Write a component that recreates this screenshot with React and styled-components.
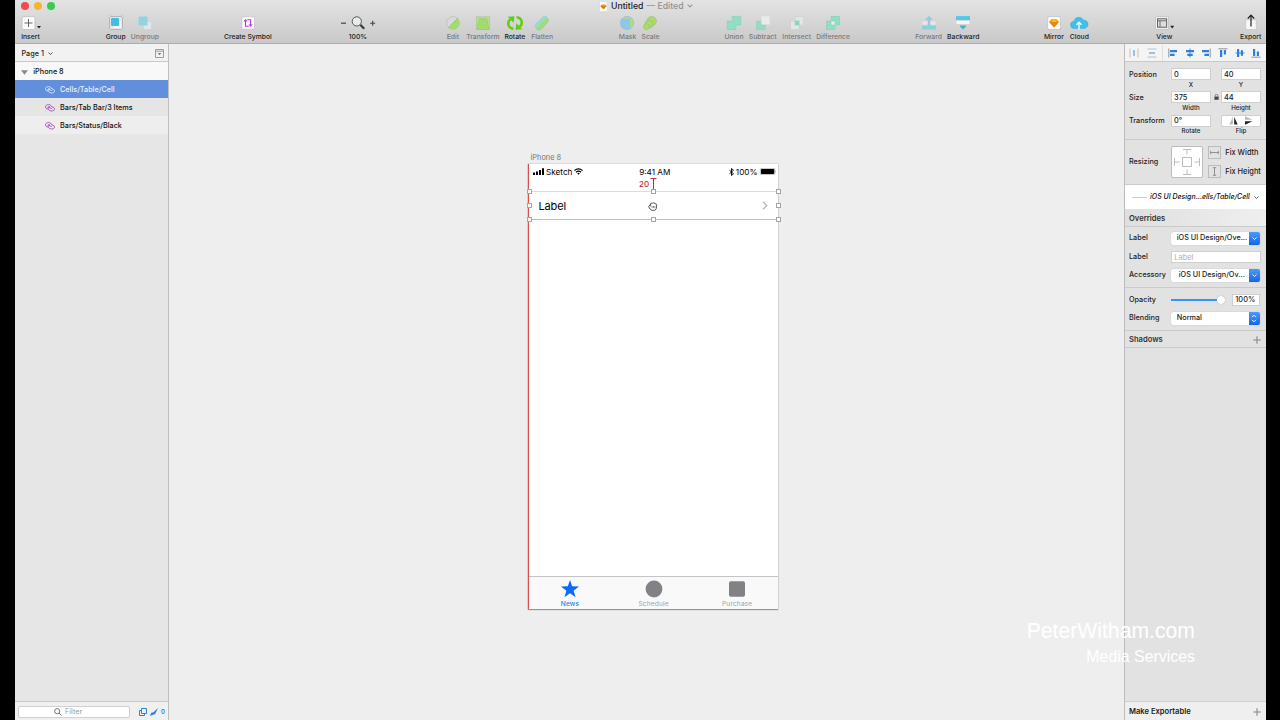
import React from 'react'
import styled, { createGlobalStyle, css } from 'styled-components'

const FONT = 'Inter, "Liberation Sans", sans-serif'

const toolbarItems = [
  { id: 'insert', label: 'Insert', width: 20, space: 5.5 },
  { id: 'group', label: 'Group', width: 20, space: 65.2 },
  { id: 'ungroup', label: 'Ungroup', width: 28, space: 5.2, disabled: true },
  { id: 'symbol', label: 'Create Symbol', width: 48, space: 65 },
  { id: 'zoom', label: '100%', width: 36, space: 68 },
  { id: 'edit', label: 'Edit', width: 14, space: 70, disabled: true },
  { id: 'transform', label: 'Transform', width: 32, space: 7, disabled: true },
  { id: 'rotate', label: 'Rotate', width: 22, space: 5 },
  { id: 'flatten', label: 'Flatten', width: 22, space: 5.3, disabled: true },
  { id: 'mask', label: 'Mask', width: 18, space: 65.3, disabled: true },
  { id: 'scale', label: 'Scale', width: 18, space: 5, disabled: true },
  { id: 'union', label: 'Union', width: 20, space: 64.5, disabled: true },
  { id: 'subtract', label: 'Subtract', width: 28, space: 4.7, disabled: true },
  { id: 'intersect', label: 'Intersect', width: 28, space: 6, disabled: true },
  { id: 'difference', label: 'Difference', width: 34, space: 5.4, disabled: true },
  { id: 'forward', label: 'Forward', width: 26, space: 65.5, disabled: true },
  { id: 'backward', label: 'Backward', width: 32, space: 5.7 },
  { id: 'mirror', label: 'Mirror', width: 20, space: 64.6 },
  { id: 'cloud', label: 'Cloud', width: 20, space: 5.5 },
  { id: 'view', label: 'View', width: 16, space: 67 },
  { id: 'export', label: 'Export', width: 22, space: 67.4 },
]

const layers = [
  { name: 'Cells/Table/Cell', selected: true },
  { name: 'Bars/Tab Bar/3 Items', shade: '#e5e5e5' },
  { name: 'Bars/Status/Black', shade: '#eeeeee' },
]

const App = () => (
  <React.Fragment>
    <GlobalStyle />
    <Desktop>
      <Window>
        <Header>
          <TitleBar>
            <TrafficLights>
              <Light $color="#ec4b52" />
              <Light $color="#f4b532" />
              <Light $color="#35cd4b" />
            </TrafficLights>
            <Title>
              <DocumentIcon />
              <span>Untitled</span>
              <Muted>— Edited</Muted>
              <Chevron width={6} color="#999" />
            </Title>
          </TitleBar>
          <Toolbar>
            {toolbarItems.map(item => (
              <ToolbarItem key={item.id} $width={item.width} $space={item.space}>
                <ToolIcon id={item.id} />
                <ToolLabel $disabled={item.disabled}>{item.label}</ToolLabel>
              </ToolbarItem>
            ))}
          </Toolbar>
        </Header>
        <Main>
          <LayerList />
          <Canvas />
          <Inspector />
        </Main>
      </Window>
      <Watermark>
        <div>PeterWitham.com</div>
        <WatermarkSub>Media Services</WatermarkSub>
      </Watermark>
    </Desktop>
  </React.Fragment>
)

const Chevron = ({ width = 5, color = '#444' }) => (
  <svg width={width} height={width * 0.6} viewBox="0 0 10 6" fill="none" stroke={color} strokeWidth="1.9">
    <path d="M1 1l4 4 4-4" />
  </svg>
)

const DocumentIcon = () => (
  <svg width="9" height="11" viewBox="0 0 9 11">
    <path d="M.5.5h5.500l2.500 2.500v7.500h-8z" fill="#fff" stroke="#ccc" strokeWidth=".5" />
    <path d="M2.5 3.5h4l1.2 1.5-3.2 3.2L1.3 5z" fill="#f39a1d" />
    <path d="M1.3 5h6.4L4.5 8.2z" fill="#d97908" />
  </svg>
)

const ToolIcon = ({ id }) => (
  <ToolSvg viewBox="-20 -8 40 16" width="40" height="16">
    {toolDrawings[id]}
  </ToolSvg>
)

const toolDrawings = {
  insert: (
    <g>
      <rect x="-8.9" y="-6.3" width="12.8" height="12.8" rx="1.5" fill="#fbfbfb" stroke="#aaa" strokeWidth=".5" />
      <path d="M-2.5-4v8M-6.5 0h8" stroke="#555" strokeWidth=".9" />
      <path d="M6 3h4L8 5.6z" fill="#222" />
    </g>
  ),
  group: (
    <g>
      <rect x="-6.5" y="-6.5" width="13" height="13" fill="#e6e6e6" stroke="#999" strokeWidth=".6" />
      <rect x="-2" y="-2" width="7" height="7" rx="1" fill="#f8fbfb" />
      <rect x="-5" y="-5" width="8" height="8" rx="1" fill="#3fbfe3" />
      <path d="M-7.3-7.3h1.6v1.6h-1.6zM5.7-7.3h1.6v1.6H5.7zM-7.3 5.7h1.6v1.6h-1.6zM5.7 5.7h1.6v1.6H5.7z" fill="#fff" stroke="#999" strokeWidth=".3" />
    </g>
  ),
  ungroup: (
    <g>
      <rect x="-1.5" y="-1.5" width="8" height="8" rx="1" fill="#dfe7e7" stroke="#c2cccc" strokeWidth=".4" />
      <rect x="-6.5" y="-6.5" width="9" height="9" rx="1" fill="#92d3df" />
    </g>
  ),
  symbol: (
    <g>
      <rect x="-6.2" y="-6.3" width="12.6" height="12.6" rx="1.5" fill="#fcfafc" stroke="#b5b5b5" strokeWidth=".5" />
      <path d="M-2.5-2v5.300H.8M2.600 2v-5.300H-.7" fill="none" stroke="#b83bd1" strokeWidth="1.1" />
      <path d="M-4.6-1.4l2.100-2.600 2.100 2.600zM.5 1.4l2.100 2.600 2.100-2.600z" fill="#b83bd1" />
    </g>
  ),
  zoom: (
    <g fill="none" stroke="#444">
      <path d="M-17 .2h5" strokeWidth="1.2" />
      <path d="M12.2.2h5M14.7-2.3v5" strokeWidth="1.1" />
      <path d="M2.3 1.8L6.2 5.8" strokeWidth="2" stroke="#333" />
      <circle cx="-1.2" cy="-1.6" r="4.6" fill="#e7ecef" strokeWidth="1" stroke="#555" />
    </g>
  ),
  edit: (
    <g>
      <circle r="6.4" fill="#d7dbd3" stroke="#b5bcb0" strokeWidth=".7" />
      <path d="M4.7-4.7A6.6 6.6 0 0 1-4.7 4.7z" fill="#a2dc70" />
      <path d="M5-5L-4.8 4.8" stroke="#8fa982" strokeWidth=".6" />
    </g>
  ),
  transform: (
    <g fill="#b9dd97" stroke="#a3bf90" strokeWidth=".5">
      <path d="M-6.6-6.3h13.2v12.8h-13.2z" />
      <path d="M-3.8-4.2h7.6L6 6.5H-6z" fill="#a4db6e" stroke="#92c46b" />
    </g>
  ),
  rotate: (
    <g fill="none" stroke="#5fce16" strokeWidth="2.5">
      <path d="M-1.6 5.8C-7.4 5-8.2-.8-4.6-3.8" />
      <path d="M1.6-5.8C7.4-5 8.2.8 4.6 3.8" />
      <path d="M-7.3-6.3l6.8-.4-.9 6.5zM7.3 6.3l-6.8.4.9-6.5z" fill="#5fce16" stroke="none" />
    </g>
  ),
  flatten: (
    <g transform="rotate(-45)">
      <rect x="-8.2" y="-3.2" width="15.4" height="7" rx="3.5" fill="#a5db76" stroke="#85c7a1" strokeWidth=".5" />
      <path d="M-4.8-4h9.6a3.3 3.3 0 0 1 3.2 3.6c-1 .7-2 .2-3 .2H-8A3.6 3.6 0 0 1-4.8-4z" fill="#94dccd" />
    </g>
  ),
  mask: (
    <g>
      <circle r="6.4" fill="#b4dc80" />
      <path d="M-5.8-4.2h9v8.9c-3.3 2.4-7.2 1.6-9-1.1z" fill="#8cc9e8" />
      <circle r="6.6" fill="none" stroke="#83bfd5" strokeWidth=".7" />
    </g>
  ),
  scale: (
    <g fill="#aadb70" stroke="#8ec45d" strokeWidth=".6">
      <circle cx="1.7" cy="-1.9" r="4.7" />
      <circle cx="-1" cy="1" r="4" />
      <circle cx="-3.6" cy="3.7" r="2.9" />
    </g>
  ),
  union: <path d="M-1.8-6.7h8.6v8.6H1.9v4.7h-8.7V-2h5z" fill="#91dec3" stroke="#83cdb3" strokeWidth=".5" />,
  subtract: (
    <g>
      <path d="M-6.6-1.8h5v3.8h3.8v4.6h-8.8z" fill="#91dec3" stroke="#83cdb3" strokeWidth=".5" />
      <rect x="-1.5" y="-6.7" width="8.2" height="8.2" fill="#e9ebea" />
    </g>
  ),
  intersect: (
    <g fill="#e3e6e4" stroke="#c8cbc9" strokeWidth=".5">
      <rect x="-2" y="-6.5" width="8.5" height="8.5" />
      <rect x="-6.5" y="-2" width="8.5" height="8.5" />
      <rect x="-2" y="-2" width="4" height="4" fill="#85d8bd" stroke="#85d8bd" />
    </g>
  ),
  difference: (
    <g fill="#91dec3" stroke="#83cdb3" strokeWidth=".5">
      <rect x="-2" y="-6.7" width="8.7" height="8.7" />
      <rect x="-6.7" y="-2" width="8.7" height="8.7" />
      <rect x="-2" y="-2" width="4" height="4" fill="#e3eee9" />
    </g>
  ),
  forward: (
    <g fill="#90cddd">
      <path d="M-7 2.6H7v4H-7z" />
      <path d="M-6.5-1.5h13v3.2h-13z" fill="#e6e9e9" />
      <path d="M0-7.3l4 4.3H1.3v6.5h-2.6V-3H-4z" />
    </g>
  ),
  backward: (
    <g fill="#55c8e8">
      <path d="M-7-6.9H7v4H-7z" />
      <path d="M-6.5-2.2h13v3.2h-13z" fill="#f5f6f6" />
      <path d="M-3 2.6h6v1L0 6.4l-3-2.8z" fill="#43b1d2" />
    </g>
  ),
  mirror: (
    <g>
      <rect x="-6.3" y="-6.3" width="12.6" height="12.6" rx="1.5" fill="#fff" stroke="#aaa" strokeWidth=".5" />
      <path d="M-2.5-4h5L5-1.2 0 4.5-5-1.2z" fill="#f7a31d" />
      <path d="M-5-1.2H5L0 4.5z" fill="#ec8604" />
      <path d="M-2.5-1.2L0-4l2.5 2.8z" fill="#ffc23f" />
    </g>
  ),
  cloud: (
    <g>
      <path d="M-4.8 5.5a3.6 3.6 0 0 1-.2-7.2A5 5 0 0 1 4.4-3a4.2 4.2 0 0 1 .8 8.5z" fill="#40bfec" stroke="#2ba4d0" strokeWidth=".4" />
      <path d="M0 6.5v-7M-2.5 1.8L0-.8l2.5 2.6" fill="none" stroke="#fff" strokeWidth="1.3" />
    </g>
  ),
  view: (
    <g>
      <rect x="-8.5" y="-6.3" width="13" height="12.6" rx="1" fill="#f5f5f5" stroke="#aaa" strokeWidth=".5" />
      <rect x="-6.5" y="-4.2" width="9.2" height="8.4" fill="#ddd" stroke="#555" strokeWidth=".9" />
      <path d="M-6.6-2.2h9.2M-4-2.2v6.2" stroke="#555" strokeWidth=".8" />
      <path d="M6.2 2.8h4l-2 2.6z" fill="#222" />
    </g>
  ),
  export: (
    <g>
      <path d="M-5.3-3.2H5.3v9.7H-5.3z" fill="#f8f8f8" stroke="#b5b5b5" strokeWidth=".5" />
      <path d="M0 3.5v-11M-3.2-4.5L0-7.8l3.2 3.3" fill="none" stroke="#222" strokeWidth="1.2" />
    </g>
  ),
}

const LayerList = () => (
  <Sidebar>
    <PageRow>
      <span>Page 1</span>
      <Chevron />
      <PageToggle width="9" height="9" viewBox="0 0 9 9">
        <path d="M.5.5h8v8h-8zM.5 2.2h8" fill="none" stroke="#888" strokeWidth=".8" />
        <path d="M2.7 4h3.6L4.5 6.2z" fill="#777" />
      </PageToggle>
    </PageRow>
    <ArtboardRow>
      <svg width="7" height="5" viewBox="0 0 7 5"><path d="M0 .3h7L3.5 4.7z" fill="#888" /></svg>
      <span>iPhone 8</span>
    </ArtboardRow>
    {layers.map(layer => (
      <LayerRow key={layer.name} $selected={layer.selected} $shade={layer.shade}>
        <svg width="10" height="8" viewBox="0 0 10 8" fill="none" stroke="currentColor" strokeWidth=".9">
          <path d="M6.9 3.1C6.6 1.5 5.2.6 3.5.6 1.8.6.5 1.6.5 2.8s1 2.2 2.4 2.3" />
          <path d="M5 2.8c-1.2-.4-2.1.2-2 1.2.1 1.7 1.6 3 3.7 3 1.7 0 2.8-.8 2.8-2S8.3 3 7 3" />
          <path d="M3 2.9l3.8 1.8" />
        </svg>
        <LayerName $selected={layer.selected}>{layer.name}</LayerName>
      </LayerRow>
    ))}
    <SidebarFooter>
      <FilterField>
        <svg width="8" height="8" viewBox="0 0 8 8" fill="none" stroke="#666" strokeWidth=".9">
          <circle cx="3.2" cy="3.2" r="2.6" /><path d="M5.1 5.1l2.5 2.5" />
        </svg>
        <span>Filter</span>
      </FilterField>
      <svg width="8" height="8" viewBox="0 0 8 8" fill="none" stroke="#2f80dc" strokeWidth="1">
        <path d="M2.5.5h5v5h-5z" /><path d="M2.5 2.5h-2v5h5v-2" />
      </svg>
      <svg width="8" height="8" viewBox="0 0 8 8"><path d="M8 0L5.2 6 0 8l1.2-3.2 2.3-.6z" fill="#2f80dc" /></svg>
      <FilterCount>0</FilterCount>
    </SidebarFooter>
  </Sidebar>
)

const Canvas = () => (
  <CanvasArea>
    <ArtboardTitle>iPhone 8</ArtboardTitle>
    <Artboard>
      <StatusBar>
        <StatusSide>
          <svg width="11" height="7" viewBox="0 0 11 7">
            <path d="M0 4.6h2V7H0zM3 3.4h2V7H3zM6 1.9h2V7H6zM9 .3h2V7H9z" />
          </svg>
          <span>Sketch</span>
          <svg width="9" height="7" viewBox="0 0 8 6" fill="none" stroke="#000" strokeWidth="1.1">
            <path d="M.4 2.2a5.2 5.2 0 0 1 7.2 0M1.8 3.7a3.2 3.2 0 0 1 4.4 0" />
            <path d="M2.9 4.7a1.6 1.6 0 0 1 2.2 0L4 5.9z" fill="#000" stroke="none" />
          </svg>
        </StatusSide>
        <span>9:41 AM</span>
        <StatusSide $end>
          <svg width="5" height="8" viewBox="0 0 5 8" fill="none" stroke="#000" strokeWidth=".9">
            <path d="M.5 2.2l4 3.6L2.5 7.5v-7l2 1.7-4 3.6" />
          </svg>
          <span>100%</span>
          <svg width="17" height="7" viewBox="0 0 17 7">
            <rect x=".3" y=".3" width="14.6" height="6.4" rx="1.5" fill="#fff" stroke="#777" strokeWidth=".5" />
            <rect x="1" y="1" width="13.2" height="5" rx=".8" />
            <path d="M15.6 2.4q1.2 1.1 0 2.2z" fill="#777" />
          </svg>
        </StatusSide>
      </StatusBar>
      <Distance>
        <span>20</span>
        <svg width="7" height="14" viewBox="0 0 7 14"><path d="M.5.5h6M.5 13.5h6M3.5.5v13" stroke="#c0322d" /></svg>
      </Distance>
      <TableCell>
        <span>Label</span>
        <svg width="6" height="9" viewBox="0 0 6 9" fill="none" stroke="#b4b4b8" strokeWidth="1.2"><path d="M1 .7l3.9 3.8L1 8.3" /></svg>
        {[0, 50, 100].map(x => [0, 50, 100].map(y => (
          (x !== 50 || y !== 50) && <Handle key={`${x}-${y}`} $x={x} $y={y} $red={x === 50 && y === 0} />
        )))}
        <GrabCursor width="10" height="10" viewBox="0 0 10 10" fill="#fff" stroke="#222" strokeWidth=".8">
          <path d="M2 4.6c-.5-.8.2-1.4.8-1.2-.1-1.6 1-1.7 1.5-1.1.4-.9 1.5-.7 1.7 0 .8-.5 1.5.1 1.5.9.8-.2 1.3.3 1.2 1.2-.1 2.3-.7 4.9-2.2 4.9H4.2C2.8 9.3 1 7 .8 5.6.7 4.6 1.5 4.4 2 4.6z" />
          <path d="M2.6 3.6v1.8M4.1 5.1v1.7M5.5 5.1v1.7M6.9 5.1v1.7" strokeWidth=".6" />
        </GrabCursor>
      </TableCell>
      <Blank />
      <TabBar>
        <TabItem $active>
          <svg width="18" height="18" viewBox="0 0 18 18"><path d="M9 0l2.2 6.3 6.8.2-5.4 4.2 2 6.6L9 13.3l-5.6 4 2-6.6L0 6.5l6.8-.2z" fill="#0a6cf5" /></svg>
          <span>News</span>
        </TabItem>
        <TabItem>
          <svg width="18" height="18" viewBox="0 0 18 18"><circle cx="9" cy="9" r="8.4" fill="#818186" /></svg>
          <span>Schedule</span>
        </TabItem>
        <TabItem>
          <svg width="18" height="18" viewBox="0 0 18 18"><rect x="1" y="1.2" width="16" height="15.6" rx="1.8" fill="#818186" /></svg>
          <span>Purchase</span>
        </TabItem>
      </TabBar>
    </Artboard>
  </CanvasArea>
)

const AlignIcon = ({ turn, center }) => (
  <svg width="10" height="10" viewBox="0 0 10 10">
    <g transform={turn}>
      <path d={center ? 'M5 .5v9' : 'M.8.5v9'} stroke={center ? '#2f80dc' : '#888'} strokeWidth=".9" />
      <path d={center ? 'M1 2h8v2.2H1zM2.3 5.8h5.4V8H2.3z' : 'M2 2h7v2.2H2zM2 5.8h4.6V8H2z'} fill="#2f80dc" />
    </g>
  </svg>
)

const SpreadIcon = ({ turned }) => (
  <svg width="10" height="10" viewBox="0 0 10 10">
    <g transform={turned ? 'rotate(90 5 5)' : undefined}>
      <path d="M1 .5v9M9 .5v9" stroke="#aaa" strokeWidth=".7" />
      <path d="M5 2v6" stroke="#8bbcf0" strokeWidth="1.8" />
    </g>
  </svg>
)

const Plus = () => (
  <svg width="8" height="8" viewBox="0 0 8 8" stroke="#888" strokeWidth="1.1"><path d="M4 .2v7.6M.2 4h7.6" /></svg>
)

const Inspector = () => (
  <Panel>
    <AlignBar>
      <AlignSpread>
        <SpreadIcon />
        <SpreadIcon turned />
      </AlignSpread>
      <AlignGroup>
        <AlignIcon />
        <AlignIcon center />
        <AlignIcon turn="matrix(-1 0 0 1 10 0)" />
        <AlignIcon turn="matrix(0 1 1 0 0 0)" />
        <AlignIcon center turn="matrix(0 1 1 0 0 0)" />
        <AlignIcon turn="matrix(0 -1 1 0 0 10)" />
      </AlignGroup>
    </AlignBar>
    <Section $height={78} $top={6}>
      <GeometryRow>
        <Caption>Position</Caption>
        <Field>0</Field>
        <span />
        <Field>40</Field>
        <Hint $column={2}>X</Hint>
        <Hint $column={4}>Y</Hint>
      </GeometryRow>
      <GeometryRow>
        <Caption>Size</Caption>
        <Field>375</Field>
        <LockIcon width="5" height="6" viewBox="0 0 5 7"><path d="M0 3h5v3.7H0z" fill="#444" /><path d="M1 3V1.8a1.5 1.5 0 0 1 3 0V3" fill="none" stroke="#444" strokeWidth=".7" /></LockIcon>
        <Field>44</Field>
        <Hint $column={2}>Width</Hint>
        <Hint $column={4}>Height</Hint>
      </GeometryRow>
      <GeometryRow>
        <Caption>Transform</Caption>
        <Field>0°</Field>
        <span />
        <FlipControl>
          <svg width="9" height="8" viewBox="0 0 9 8"><path d="M3.8 0v7.5H.3z" fill="#bbb" /><path d="M5.2 0v7.5h3.5z" fill="#222" /></svg>
          <svg width="8" height="9" viewBox="0 0 8 9"><path d="M0 .3v3.5h7.5z" fill="#bbb" /><path d="M0 8.7V5.2h7.5z" fill="#222" /></svg>
        </FlipControl>
        <Hint $column={2}>Rotate</Hint>
        <Hint $column={4}>Flip</Hint>
      </GeometryRow>
    </Section>
    <Section $height={45} $row>
      <RowLabel>Resizing</RowLabel>
      <ResizeBox width="32" height="32" viewBox="0 0 32 32" fill="none" stroke="#bdbdbd">
        <rect x=".5" y=".5" width="31" height="31" rx="1.5" fill="#fff" />
        <path d="M11.5 11.5h9v9h-9zM16 3.5v5M12 3.5h8M16 23.5v5M12 28.5h8M3.5 16h5M3.5 12v8M23.5 16h5M28.5 12v8" />
      </ResizeBox>
      <FixColumn>
        <FixOption>
          <FixIcon width="13" height="13" viewBox="0 0 13 13"><path d="M2 6.5h9M2 4.5v4M11 4.5v4" /></FixIcon>
          Fix Width
        </FixOption>
        <FixOption>
          <FixIcon width="13" height="13" viewBox="0 0 13 13"><path d="M6.5 2v9M4.5 2h4M4.5 11h4" /></FixIcon>
          Fix Height
        </FixOption>
      </FixColumn>
    </Section>
    <SymbolPicker>
      <SymbolSwatch />
      <em>iOS UI Design...ells/Table/Cell</em>
      <Chevron width={5} color="#555" />
    </SymbolPicker>
    <SectionTitle $height={18} $light>Overrides</SectionTitle>
    <Section $height={61} $top={1}>
      <FormRow $height={20}>
        <RowLabel>Label</RowLabel>
        <Select><SelectText>iOS UI Design/Ove...</SelectText><SelectCap><Chevron color="#fff" /></SelectCap></Select>
      </FormRow>
      <FormRow $height={18}>
        <RowLabel>Label</RowLabel>
        <Field $wide $placeholder>Label</Field>
      </FormRow>
      <FormRow $height={18}>
        <RowLabel>Accessory</RowLabel>
        <Select><SelectText $indent={2}>iOS UI Design/Ov...</SelectText><SelectCap><Chevron color="#fff" /></SelectCap></Select>
      </FormRow>
    </Section>
    <Section $height={43} $top={2}>
      <FormRow $height={19}>
        <RowLabel>Opacity</RowLabel>
        <Slider><Thumb /></Slider>
        <Field $small>100%</Field>
      </FormRow>
      <FormRow $height={18}>
        <RowLabel>Blending</RowLabel>
        <Select>
          <SelectText>Normal</SelectText>
          <SelectCap>
            <svg width="6" height="9" viewBox="0 0 6 9" fill="none" stroke="#fff" strokeWidth="1"><path d="M1 3.2l2-2 2 2M1 5.8l2 2 2-2" /></svg>
          </SelectCap>
        </Select>
      </FormRow>
    </Section>
    <SectionTitle $height={17}>Shadows<Plus /></SectionTitle>
    <Blank />
    <ExportRow>Make Exportable<Plus /></ExportRow>
  </Panel>
)

const GlobalStyle = createGlobalStyle`
  * {
    box-sizing: border-box;
  }

  body {
    margin: 0;
    background: #000;
    overflow: hidden;
  }

  svg {
    display: block;
    flex: none;
  }
`

const Desktop = styled.div`
  width: 1280px;
  height: 720px;
  padding: 0 14px 0 15px;
  background: #000;
  overflow: hidden;
`

const Window = styled.div`
  display: flex;
  flex-direction: column;
  height: 100%;
  font: 500 7.25px/10px ${FONT};
  color: #222;
  white-space: nowrap;
`

const Header = styled.header`
  height: 44px;
  flex: none;
  background: linear-gradient(#e3e3e3, #c9c9c9);
  border-bottom: 1px solid #adadad;
`

const TitleBar = styled.div`
  display: grid;
  grid-template-columns: 584px auto;
  height: 12px;
  align-items: center;
`

const TrafficLights = styled.div`
  display: flex;
  gap: 5.3px;
  padding-left: 5.5px;
`

const Light = styled.i`
  width: 8px;
  height: 8px;
  border-radius: 50%;
  background: ${props => props.$color};
`

const Title = styled.div`
  display: flex;
  align-items: center;
  gap: 3px;
  font-size: 8.7px;
  line-height: 12px;
  color: #222;
`

const Muted = styled.span`
  color: #929292;
`

const Toolbar = styled.div`
  display: flex;
  padding-top: 3px;
`

const ToolbarItem = styled.div`
  display: flex;
  flex-direction: column;
  align-items: center;
  flex: none;
  width: ${props => props.$width}px;
  margin-left: ${props => props.$space}px;
`

const ToolSvg = styled.svg`
  overflow: visible;
`

const ToolLabel = styled.span`
  font-size: 6.8px;
  line-height: 9px;
  margin-top: 1px;
  color: ${props => (props.$disabled ? '#7a7a7a' : '#222')};
`

const Main = styled.div`
  display: flex;
  flex: 1;
  min-height: 0;
`

const Sidebar = styled.aside`
  display: flex;
  flex-direction: column;
  width: 154px;
  flex: none;
  background: #e6e6e6;
  border-right: 1px solid #c0c0c0;
`

const PageRow = styled.div`
  display: flex;
  align-items: center;
  gap: 4px;
  height: 18px;
  padding: 2px 4px 0 6.5px;
  background: #f2f2f2;
  border-bottom: 1px solid #c9c9c9;
`

const PageToggle = styled.svg`
  margin-left: auto;
`

const ArtboardRow = styled.div`
  display: flex;
  align-items: center;
  gap: 5.3px;
  height: 18px;
  padding: 2px 0 0 6px;
  background: #f8f8f8;
  color: #111;
`

const LayerRow = styled.div`
  display: flex;
  align-items: center;
  gap: 5px;
  height: 18px;
  padding: 2px 0 0 30px;
  background: ${props => (props.$selected ? '#628fdb' : props.$shade)};
  color: ${props => (props.$selected ? '#dce8fc' : '#a34bbd')};
`

const LayerName = styled.span`
  color: ${props => (props.$selected ? '#e8effc' : '#111')};
`

const SidebarFooter = styled.div`
  display: flex;
  align-items: center;
  gap: 3px;
  height: 19px;
  margin-top: auto;
  padding: 1px 0 0 3px;
  background: #f0f0f0;
  border-top: 1px solid #c8c8c8;
`

const FilterField = styled.div`
  display: flex;
  align-items: center;
  gap: 3px;
  width: 112px;
  height: 12px;
  margin-right: 6px;
  padding: 1px 0 0 35px;
  background: #fff;
  border: 1px solid #d0d0d0;
  border-radius: 2px;
  color: #9a9a9a;
  font-weight: 400;
`

const FilterCount = styled.span`
  padding-top: 1px;
  font-size: 6px;
  font-weight: 600;
  color: #2f80dc;
`

const CanvasArea = styled.main`
  display: flex;
  flex-direction: column;
  flex: 1;
  padding: 108px 0 0 359px;
  background: #eeeeee;
`

const ArtboardTitle = styled.div`
  height: 12px;
  padding: 1px 0 0 2.5px;
  font-size: 7.4px;
  font-weight: 400;
  color: #777;
`

const Artboard = styled.div`
  display: flex;
  flex-direction: column;
  width: 250px;
  height: 445px;
  background: #fff;
  border-left: 1px solid #dc4d49;
  box-shadow: 0 0 1px #888, 0 1px 1px #999;
`

const StatusBar = styled.div`
  display: grid;
  grid-template-columns: 1fr auto 1fr;
  align-items: center;
  height: 14px;
  padding: 1px 1.5px 0 4px;
  font-size: 8.2px;
  font-weight: 400;
  color: #000;
`

const StatusSide = styled.div`
  display: flex;
  align-items: center;
  gap: 2px;
  ${props => props.$end && css`
    justify-content: flex-end;
  `}
`

const Distance = styled.div`
  display: flex;
  align-items: center;
  gap: 1px;
  height: 13px;
  padding-left: 110px;
  font-size: 8px;
  line-height: 12px;
  color: #bf332d;

  span {
    margin-bottom: 1px;
  }
`

const TableCell = styled.div`
  position: relative;
  display: flex;
  align-items: center;
  justify-content: space-between;
  height: 29px;
  padding: 0 10px 0 9.5px;
  border-top: 1px solid #dcdcdc;
  border-bottom: 1px solid #bdbdbd;
  font-size: 11px;
  font-weight: 400;
  line-height: 14px;
  letter-spacing: -.15px;
  color: #000;
`

const Handle = styled.i`
  position: absolute;
  left: ${props => props.$x}%;
  top: ${props => props.$y}%;
  width: 5px;
  height: 5px;
  margin: ${props => (props.$y === 100 ? -2 : -3)}px 0 0 -2.5px;
  background: #fff;
  border: 1px solid ${props => (props.$red ? '#d58a88' : '#a5a5a5')};
`

const GrabCursor = styled.svg`
  position: absolute;
  left: 119px;
  top: 9px;
`

const Blank = styled.div`
  flex: 1;
`

const TabBar = styled.div`
  display: grid;
  grid-template-columns: repeat(3, 83.6px);
  width: 249px;
  height: 33px;
  background: #f9f9f9;
  border-top: 1px solid #c4c4c4;
`

const TabItem = styled.div`
  display: flex;
  flex-direction: column;
  align-items: center;
  padding: 3px 1.6px 0 0;
  font-size: 6.6px;
  line-height: 8px;
  font-weight: ${props => (props.$active ? 500 : 400)};
  color: ${props => (props.$active ? '#1689e0' : '#a2a2a6')};

  span {
    margin-top: 2px;
    letter-spacing: .15px;
  }
`

const Panel = styled.aside`
  display: flex;
  flex-direction: column;
  width: 142px;
  flex: none;
  background: #e2e2e2;
  border-left: 1px solid #bcbcbc;
`

const AlignBar = styled.div`
  display: flex;
  height: 18px;
  flex: none;
  padding-top: 1px;
  background: #f4f4f4;
  border-bottom: 1px solid #c9c9c9;
`

const AlignSpread = styled.div`
  display: flex;
  align-items: center;
  gap: 7.5px;
  width: 38px;
  padding-left: 4px;
  border-right: 1px solid #dedede;
`

const AlignGroup = styled.div`
  display: flex;
  align-items: center;
  gap: 6.7px;
  padding-left: 5px;
`

const Section = styled.section`
  height: ${props => props.$height}px;
  flex: none;
  padding: ${props => props.$top || 0}px 0 0 4px;
  border-bottom: 1px solid #cbcbcb;
  ${props => props.$row && css`
    display: flex;
    align-items: center;
  `}
`

const GeometryRow = styled.div`
  display: grid;
  grid-template-columns: 42px 40px 10px 40px;
  grid-template-rows: 12px 9px;
  align-items: center;
  height: 23.3px;
`

const Caption = styled.span`
  padding-top: 1px;
`

const Field = styled.div`
  display: flex;
  align-items: center;
  height: 12px;
  width: ${props => (props.$wide ? 90 : props.$small ? 28 : 40)}px;
  padding: 1px 0 0 2px;
  background: #fff;
  border: 1px solid #cfcfcf;
  color: ${props => (props.$placeholder ? '#b0b0b0' : '#222')};
  font-size: 7.4px;
  font-weight: ${props => (props.$placeholder ? 400 : 500)};
`

const Hint = styled.span`
  grid-column: ${props => props.$column};
  grid-row: 2;
  justify-self: center;
  font-size: 6.2px;
  line-height: 8px;
`

const LockIcon = styled.svg`
  justify-self: center;
`

const FlipControl = styled.div`
  display: flex;
  align-items: center;
  justify-content: space-evenly;
  height: 12px;
  background: linear-gradient(90deg, #fff 49%, #ddd 49% 51%, #fff 51%);
  border: 1px solid #d0d0d0;
  border-radius: 2px;
`

const RowLabel = styled.span`
  width: 42.3px;
  flex: none;
`

const ResizeBox = styled.svg`
  margin-right: 5px;
`

const FixColumn = styled.div`
  display: flex;
  flex-direction: column;
  gap: 6px;
`

const FixOption = styled.div`
  display: flex;
  align-items: center;
  gap: 4px;
  font-size: 7.4px;
`

const FixIcon = styled.svg`
  border: 1px solid #bcbcbc;
  stroke: #777;
  stroke-width: .9;
  fill: none;
`

const SymbolPicker = styled.div`
  display: flex;
  align-items: center;
  height: 24px;
  flex: none;
  padding-left: 7px;
  background: #fff;
  font-size: 7px;

  em {
    margin: 0 4px 0 3px;
    color: #111;
  }
`

const SymbolSwatch = styled.i`
  width: 15px;
  height: 1px;
  background: #ccc;
`

const SectionTitle = styled.div`
  display: flex;
  align-items: center;
  justify-content: space-between;
  height: ${props => props.$height}px;
  flex: none;
  padding: ${props => (props.$light ? 2 : 1)}px 5px 0 4px;
  background: ${props => (props.$light ? 'linear-gradient(90deg, #dfdfdf, #efefef)' : '#e2e2e2')};
  border-bottom: 1px solid #cbcbcb;
  font-size: 7.6px;
  font-weight: 600;
  color: #333;
`

const FormRow = styled.div`
  display: flex;
  align-items: center;
  height: ${props => props.$height}px;
`

const Select = styled.div`
  display: flex;
  align-items: center;
  justify-content: space-between;
  width: 88.5px;
  height: 13px;
  background: #fff;
  border-radius: 2px;
  box-shadow: 0 0 1px #999;
`

const SelectText = styled.span`
  padding-left: ${props => 5.5 + (props.$indent || 0)}px;
`

const SelectCap = styled.i`
  display: flex;
  align-items: center;
  justify-content: center;
  width: 11px;
  height: 13px;
  background: linear-gradient(#4a9bf8, #1566e4);
  border-radius: 0 2px 2px 0;
`

const Slider = styled.div`
  display: flex;
  align-items: center;
  justify-content: flex-end;
  width: 54px;
  height: 2px;
  margin-right: 7px;
  background: linear-gradient(90deg, #3d91ee 50px, transparent 50px);
`

const Thumb = styled.i`
  width: 8px;
  height: 8px;
  border-radius: 50%;
  background: #fff;
  box-shadow: 0 0 1px #888;
`

const ExportRow = styled.div`
  display: flex;
  align-items: center;
  justify-content: space-between;
  height: 19px;
  flex: none;
  padding: 1px 5px 0 4px;
  background: #efefef;
  border-top: 1px solid #cfcfcf;
  font-size: 7.6px;
  font-weight: 600;
`

// burnt-in caption, overlaps both canvas and inspector
const Watermark = styled.div`
  position: absolute;
  left: 995px;
  top: 619px;
  width: 200px;
  text-align: right;
  font: 21.2px/24px "Liberation Sans", Arial, sans-serif;
  color: #fff;
`

const WatermarkSub = styled.div`
  margin-top: 4px;
  font-size: 15.9px;
  line-height: 20px;
`

export default App
